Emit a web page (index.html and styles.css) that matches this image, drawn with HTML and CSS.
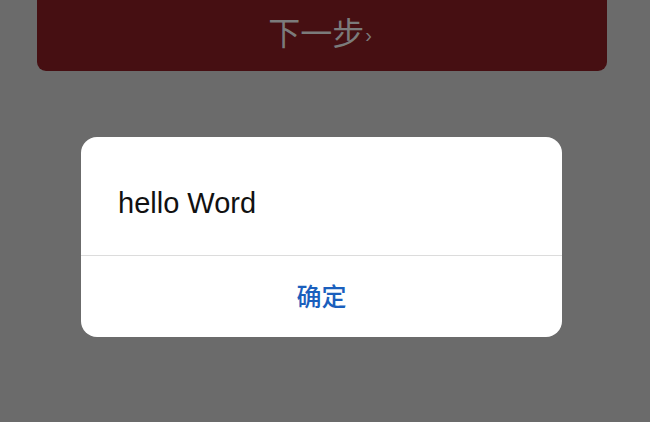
FILE: index.html
```html
<!DOCTYPE html>
<html lang="zh">
<head>
<meta charset="utf-8">
<link rel="stylesheet" href="styles.css">
</head>
<body>
<div class="page">
  <div class="next-btn">下一步<span class="chev">›</span></div>
  <div class="dialog">
    <div class="dialog-body">hello Word</div>
    <div class="dialog-foot">确定</div>
  </div>
</div>
</body>
</html>
```
FILE: styles.css
```css
html, body {
  margin: 0;
  padding: 0;
  background: #6b6b6b;
  width: 650px;
  height: 422px;
  overflow: hidden;
}
.page {
  display: flex;
  flex-direction: column;
  align-items: center;
  font-family: "Liberation Sans", "Noto Sans CJK SC", sans-serif;
}
.next-btn {
  box-sizing: border-box;
  width: 570px;
  height: 91px;
  margin-top: -20px;
  margin-left: -6px;
  background: #460f12;
  border-radius: 0 0 9px 9px;
  color: #7b7b7b;
  font-size: 32px;
  display: flex;
  align-items: center;
  justify-content: center;
  padding-top: 10px;
  padding-right: 4px;
}
.chev {
  font-size: 20px;
  margin-left: 1px;
  margin-top: 10px;
}
.dialog {
  width: 481px;
  height: 200px;
  margin-top: 66px;
  margin-left: -7px;
  background: #fff;
  border-radius: 16px;
  overflow: hidden;
}
.dialog-body {
  height: 118px;
  padding: 0 37px;
  display: flex;
  align-items: center;
  font-size: 29px;
  color: #111;
  padding-top: 14px;
  box-sizing: border-box;
}
.dialog-foot {
  border-top: 1px solid #dcdcdc;
  height: 82px;
  display: flex;
  align-items: center;
  justify-content: center;
  color: #1b5fbd;
  font-size: 25px;
  font-weight: 500;
  padding-bottom: 3px;
  box-sizing: border-box;
}
```
